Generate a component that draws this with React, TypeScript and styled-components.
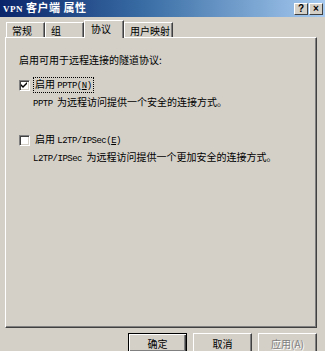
import React from "react";
import styled, { createGlobalStyle } from "styled-components";

const Global = createGlobalStyle`
  html, body { margin: 0; padding: 0; background: #d4d0c8; }
  body { font-family: "Noto Sans CJK SC", "Liberation Sans", sans-serif; }
`;

const Window = styled.div`
  width: 325px;
  height: 351px;
  background: #d4d0c8;
  display: flex;
  flex-direction: column;
  overflow: hidden;
  font-size: 10px;
  color: #000;
`;

const TitleBar = styled.div`
  height: 17px;
  flex: none;
  display: flex;
  align-items: center;
  padding: 0 2px 0 3px;
  background: linear-gradient(90deg, #0a246a 0%, #3a6ea5 45%, #a6caf0 100%);
  color: #fff;
  font-weight: bold;
  box-sizing: border-box;
`;

const TitleText = styled.div`
  flex: 1;
  font-size: 11px;
  line-height: 13px;
  white-space: pre;
  letter-spacing: 0.5px;
`;

const TitleLatin = styled.span`
  font-family: "Liberation Serif", serif;
  font-size: 9px;
  font-weight: bold;
`;

const CaptionButton = styled.div`
  width: 14px;
  height: 12px;
  margin-left: 1px;
  background: #d4d0c8;
  box-sizing: border-box;
  border: 1px solid;
  border-color: #fff #404040 #404040 #fff;
  color: #000;
  font-family: "Liberation Sans", sans-serif;
  font-size: 10px;
  font-weight: bold;
  line-height: 10px;
  text-align: center;
`;

const Body = styled.div`
  flex: 1;
  display: flex;
  flex-direction: column;
  padding: 2px 8px 0 5px;
`;

const TabRow = styled.div`
  height: 18px;
  display: flex;
  align-items: flex-end;
  padding-left: 1px;
  position: relative;
  z-index: 1;
`;

const Tab = styled.div<{ $active?: boolean; $w: number }>`
  width: ${(p) => p.$w}px;
  height: ${(p) => (p.$active ? 18 : 15)}px;
  margin-bottom: ${(p) => (p.$active ? -1 : 0)}px;
  box-sizing: border-box;
  border-top: 1px solid #fff;
  border-left: 1px solid #fff;
  border-right: 1px solid #404040;
  background: #d4d0c8;
  display: flex;
  align-items: center;
  padding-left: ${(p) => (p.$active ? 6 : 5)}px;
  padding-bottom: ${(p) => (p.$active ? 3 : 0)}px;
  font-size: 10px;
  box-shadow: inset -1px 0 0 #808080;
`;

const Panel = styled.div`
  height: 291px;
  box-sizing: border-box;
  border: 1px solid;
  border-color: #fff #404040 #404040 #fff;
  box-shadow: inset -1px -1px 0 #808080;
  padding: 16px 0 0 13px;
  display: flex;
  flex-direction: column;
`;

const Heading = styled.div`
  height: 12px;
  line-height: 12px;
`;

const OptionBlock = styled.div<{ $top: number }>`
  margin-top: ${(p) => p.$top}px;
  display: flex;
  flex-direction: column;
  gap: 5px;
`;

const CheckRow = styled.div`
  display: flex;
  align-items: center;
  gap: 4px;
  height: 12px;
`;

const Box = styled.div`
  width: 11px;
  height: 11px;
  box-sizing: border-box;
  background: #fff;
  border: 1px solid;
  border-color: #808080 #fff #fff #808080;
  box-shadow: inset 1px 1px 0 #404040, inset -1px -1px 0 #d4d0c8;
  display: flex;
  align-items: center;
  justify-content: center;
`;

const Label = styled.span<{ $focus?: boolean }>`
  padding: 0 1px;
  line-height: 11px;
  outline: ${(p) => (p.$focus ? "1px dotted #000" : "none")};
  white-space: pre;
`;

const Latin = styled.span`
  font-family: "Liberation Mono", monospace;
  font-size: 9px;
  letter-spacing: -0.5px;
`;

const Desc = styled.div`
  padding-left: 14px;
  line-height: 12px;
  white-space: pre;
`;

const Footer = styled.div`
  display: flex;
  justify-content: flex-end;
  gap: 6px;
  padding: 5px 0 0 0;
`;

const Button = styled.div<{ $default?: boolean; $disabled?: boolean }>`
  width: 59px;
  height: 20px;
  box-sizing: border-box;
  border: 1px solid;
  border-color: ${(p) => (p.$default ? "#000" : "#fff #404040 #404040 #fff")};
  box-shadow: ${(p) =>
    p.$default
      ? "inset 1px 1px 0 #fff, inset -1px -1px 0 #404040, inset -2px -2px 0 #808080"
      : "inset -1px -1px 0 #808080"};
  display: flex;
  align-items: center;
  justify-content: center;
  font-size: 10px;
  color: ${(p) => (p.$disabled ? "#808080" : "#000")};
  text-shadow: ${(p) => (p.$disabled ? "1px 1px 0 #fff" : "none")};
`;

const Check = () => (
  <svg width="7" height="7" viewBox="0 0 7 7">
    <path d="M0 2 L2 4 L6 0 L6 2 L2 6 L0 4 Z" fill="#000" />
  </svg>
);

export default function App() {
  return (
    <>
      <Global />
      <Window>
        <TitleBar>
          <TitleText>
            <TitleLatin>VPN</TitleLatin> 客户端 属性
          </TitleText>
          <CaptionButton>?</CaptionButton>
          <CaptionButton>×</CaptionButton>
        </TitleBar>
        <Body>
          <TabRow>
            <Tab $w={39}>常规</Tab>
            <Tab $w={39}>组</Tab>
            <Tab $w={40} $active>协议</Tab>
            <Tab $w={49}>用户映射</Tab>
          </TabRow>
          <Panel>
            <Heading>启用可用于远程连接的隧道协议:</Heading>
            <OptionBlock $top={13}>
              <CheckRow>
                <Box>
                  <Check />
                </Box>
                <Label $focus>
                  启用 <Latin>PPTP(<u>N</u>)</Latin>
                </Label>
              </CheckRow>
              <Desc>
                <Latin>PPTP</Latin>  为远程访问提供一个安全的连接方式。
              </Desc>
            </OptionBlock>
            <OptionBlock $top={24}>
              <CheckRow>
                <Box />
                <Label>
                  启用 <Latin>L2TP/IPSec(<u>E</u>)</Latin>
                </Label>
              </CheckRow>
              <Desc>
                <Latin>L2TP/IPSec</Latin>  为远程访问提供一个更加安全的连接方式。
              </Desc>
            </OptionBlock>
          </Panel>
          <Footer>
            <Button $default>确定</Button>
            <Button>取消</Button>
            <Button $disabled>应用(A)</Button>
          </Footer>
        </Body>
      </Window>
    </>
  );
}
